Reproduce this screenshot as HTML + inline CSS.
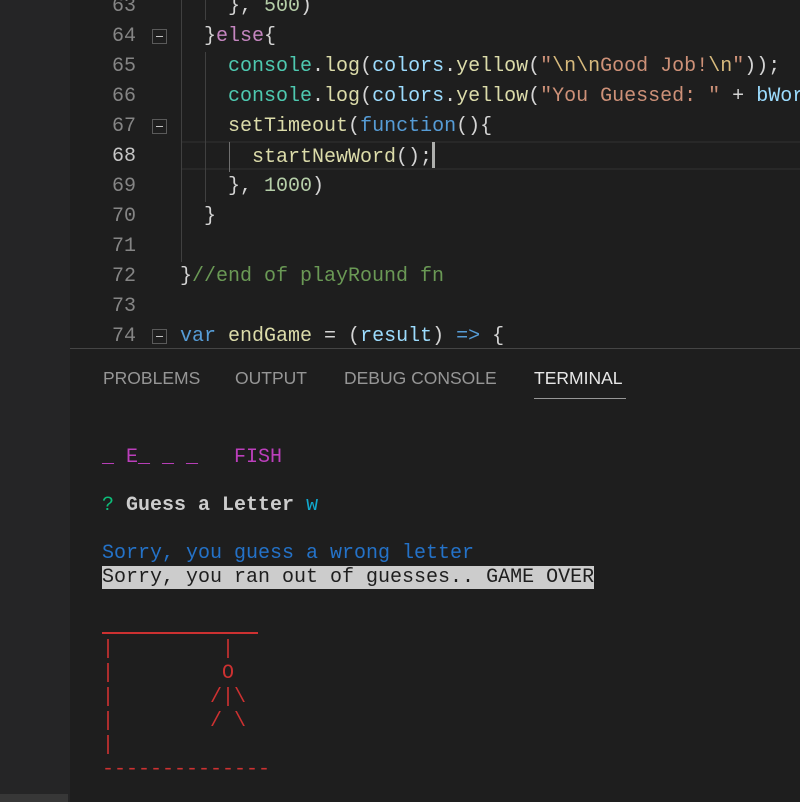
<!DOCTYPE html>
<html><head><meta charset="utf-8"><style>
*{margin:0;padding:0;box-sizing:border-box}
body{width:800px;height:802px;background:#1e1e1e;overflow:hidden;position:relative;font-family:"Liberation Mono",monospace}
.side{position:absolute;left:0;top:0;width:70px;height:802px;background:#252526}
.sbar{position:absolute;left:0;top:794px;width:68px;height:8px;background:#373737}
.ln{position:absolute;left:70px;width:66px;text-align:right;font-size:20px;line-height:30px;color:#858585}
.code{position:absolute;left:180px;font-size:20px;line-height:30px;color:#d4d4d4;white-space:pre}
.fold{position:absolute;left:152px;width:15px;height:15px;border:1px solid #5a5a5a}
.fold:after{content:"";position:absolute;left:3px;top:6px;width:7px;height:1px;background:#c5c5c5}
.g{position:absolute;width:1px;background:#404040}
.k{color:#c586c0}.t{color:#4ec9b0}.f{color:#dcdcaa}.v{color:#9cdcfe}.s{color:#ce9178}.e{color:#d7ba7d}.n{color:#b5cea8}.b{color:#569cd6}.c{color:#6a9955}
.tabs{position:absolute;top:368px;font-family:"Liberation Sans",sans-serif;font-size:17.5px;color:#969696;line-height:20px}
.term{position:absolute;left:102px;font-size:20px;line-height:24px;white-space:pre;color:#cccccc}
.r{color:#cd3131}
</style></head><body>
<div class="side"></div><div class="sbar"></div>
<div style="position:absolute;left:182px;top:141px;width:618px;height:29px;border-top:2px solid #282828;border-bottom:2px solid #282828"></div>
<div class="ln" style="top:-8px">63</div>
<div class="ln" style="top:22px">64</div>
<div class="ln" style="top:52px">65</div>
<div class="ln" style="top:82px">66</div>
<div class="ln" style="top:112px">67</div>
<div class="ln" style="top:142px;color:#c6c6c6">68</div>
<div class="ln" style="top:172px">69</div>
<div class="ln" style="top:202px">70</div>
<div class="ln" style="top:232px">71</div>
<div class="ln" style="top:262px">72</div>
<div class="ln" style="top:292px">73</div>
<div class="ln" style="top:322px">74</div>
<div class="fold" style="top:29px"></div>
<div class="fold" style="top:119px"></div>
<div class="fold" style="top:329px"></div>
<div class="g" style="left:181px;top:0;height:262px"></div>
<div class="g" style="left:205px;top:0;height:20px"></div>
<div class="g" style="left:205px;top:52px;height:150px"></div>
<div class="g" style="left:229px;top:142px;height:30px;background:#707070"></div>
<div class="code" style="top:-8px">    }, <span class="n">500</span>)</div>
<div class="code" style="top:22px">  }<span class="k">else</span>{</div>
<div class="code" style="top:52px">    <span class="t">console</span>.<span class="f">log</span>(<span class="v">colors</span>.<span class="f">yellow</span>(<span class="s">"<span class="e">\n\n</span>Good Job!<span class="e">\n</span>"</span>));</div>
<div class="code" style="top:82px">    <span class="t">console</span>.<span class="f">log</span>(<span class="v">colors</span>.<span class="f">yellow</span>(<span class="s">"You Guessed: "</span> + <span class="v">bWord</span></div>
<div class="code" style="top:112px">    <span class="f">setTimeout</span>(<span class="b">function</span>(){</div>
<div class="code" style="top:142px">      <span class="f">startNewWord</span>();<span style="display:inline-block;width:3px;height:26px;background:#aeafad;vertical-align:-6px"></span></div>
<div class="code" style="top:172px">    }, <span class="n">1000</span>)</div>
<div class="code" style="top:202px">  }</div>
<div class="code" style="top:262px">}<span class="c">//end of playRound fn</span></div>
<div class="code" style="top:322px"><span class="b">var</span> <span class="f">endGame</span> = (<span class="v">result</span>) <span class="b">=&gt;</span> {</div>
<div style="position:absolute;left:70px;top:348px;width:730px;height:1px;background:#454545"></div>
<div class="tabs" style="left:103px">PROBLEMS</div>
<div class="tabs" style="left:235px">OUTPUT</div>
<div class="tabs" style="left:344px">DEBUG CONSOLE</div>
<div class="tabs" style="left:534px;color:#e7e7e7">TERMINAL</div>
<div style="position:absolute;left:534px;top:398px;width:92px;height:1px;background:#e7e7e7;opacity:.6"></div>
<div class="term" style="top:446px;color:#bc3fbc">_ E_ _ _   FISH</div>
<div class="term" style="top:494px"><span style="color:#0dbc79">?</span> <b>Guess a Letter</b> <span style="color:#11a8cd">w</span></div>
<div class="term" style="top:542px;color:#2472c8">Sorry, you guess a wrong letter</div>
<div class="term" style="top:566px;color:#1e1e1e"><span style="background:#cccccc">Sorry, you ran out of guesses.. GAME OVER</span></div>
<div style="position:absolute;left:102px;top:632px;width:156px;height:2px;background:#cd3131"></div>
<div class="term r" style="top:638px">|         |</div>
<div class="term r" style="top:662px">|         O</div>
<div class="term r" style="top:686px">|        /|\</div>
<div class="term r" style="top:710px">|        / \</div>
<div class="term r" style="top:734px">|</div>
<div class="term r" style="top:758px">--------------</div>
</body></html>
